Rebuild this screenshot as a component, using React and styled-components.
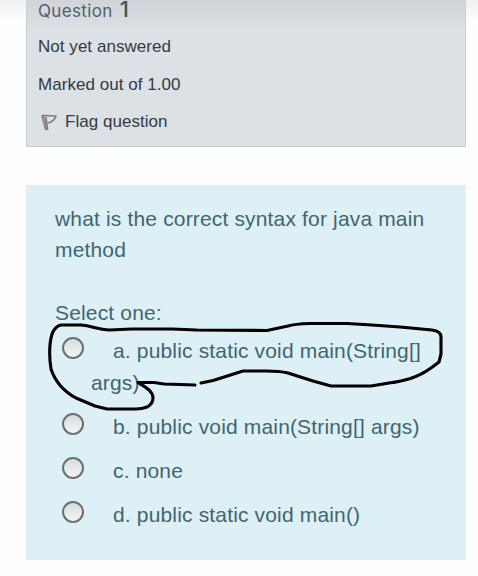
import React from "react";
import styled, { createGlobalStyle } from "styled-components";

const GlobalStyle = createGlobalStyle`
  body {
    margin: 0;
    background: #fefefe;
    font-family: "Liberation Sans", Arial, sans-serif;
    overflow: hidden;
  }
`;

const Page = styled.main`
  box-sizing: border-box;
  width: 478px;
  height: 576px;
  padding: 0 12px 0 26px;
  background: linear-gradient(#f1f1f2, #fefefe 22px);
  overflow: hidden;
`;

const InfoPanel = styled.section`
  box-sizing: border-box;
  height: 147px;
  padding-left: 11px;
  border: 1px solid #c9cdd2;
  border-top: 0;
  background: linear-gradient(#d1d4d8, #dce1e5 30px);
  color: #343a3f;
  font-size: 17px;
  letter-spacing: 0.04px;
`;

const Heading = styled.h3`
  display: flex;
  align-items: baseline;
  gap: 7px;
  height: 28.4px;
  margin: 0;
  color: #50616d;
  font-family: Inter, sans-serif;
  font-weight: 400;
  font-size: 17px;
  line-height: 19px;
  letter-spacing: 0.35px;
`;

const QuestionNumber = styled.span`
  font-size: 22px;
  line-height: 19px;
  font-weight: 500;
  letter-spacing: 0;
  color: #43525e;
`;

const InfoLine = styled.div`
  display: flex;
  align-items: center;
  height: 37.6px;
`;

const FlagIcon = styled.svg`
  width: 20px;
  height: 20px;
  margin-right: 7px;
`;

const QuestionPanel = styled.section`
  position: relative;
  box-sizing: border-box;
  height: 375px;
  margin-top: 38px;
  padding: 17.6px 0 0 29px;
  background: #dcf0f6;
  color: #41666f;
  font-size: 21px;
  line-height: 31.4px;
  letter-spacing: 0.16px;
`;

const Prompt = styled.p`
  width: 385px;
  margin: 0 0 31.4px;
`;

const Choices = styled.div`
  display: grid;
  gap: 12.7px;
  margin-top: 6.9px;
`;

const Choice = styled.label`
  display: flex;
  gap: 7px;
`;

const Radio = styled.input`
  appearance: none;
  flex: none;
  box-sizing: border-box;
  width: 22px;
  height: 22px;
  margin: 2px 0 0 7px;
  border: 2px solid #6b7072;
  border-radius: 50%;
  background: linear-gradient(#d9dbdc, #f5f5f5);
`;

const ChoiceText = styled.span`
  width: 350px;
  text-indent: 22px;
`;

const Ink = styled.svg`
  position: absolute;
  left: 19px;
  top: 135px;
  width: 402px;
  height: 95px;
  pointer-events: none;
`;

const choices = [
  "a. public static void main(String[] args)",
  "b. public void main(String[] args)",
  "c. none",
  "d. public static void main()",
];

export default function App() {
  return (
    <>
      <GlobalStyle />
      <Page>
        <InfoPanel>
          <Heading>
            Question <QuestionNumber>1</QuestionNumber>
          </Heading>
          <InfoLine>Not yet answered</InfoLine>
          <InfoLine>Marked out of 1.00</InfoLine>
          <InfoLine>
            <FlagIcon viewBox="0 0 20 20" fill="none" stroke="#7b7c7e" strokeLinejoin="round">
              <path d="M4.5 3 8.5 18" stroke="#8b8d8f" strokeWidth="3.2" />
              <path d="M4 3.5 18 4 Q16 10 9.5 11" strokeWidth="1.7" />
              <path d="M8 5 9.6 18" strokeWidth="1.6" />
            </FlagIcon>
            Flag question
          </InfoLine>
        </InfoPanel>
        <QuestionPanel>
          <Prompt>what is the correct syntax for java main method</Prompt>
          <div>Select one:</div>
          <Choices>
            {choices.map((text) => (
              <Choice key={text}>
                <Radio type="radio" name="answer" />
                <ChoiceText>{text}</ChoiceText>
              </Choice>
            ))}
          </Choices>
          <Ink
            viewBox="45 320 402 95"
            fill="none"
            stroke="#000"
            strokeWidth="3.1"
            strokeLinecap="round"
            strokeLinejoin="round"
          >
            <path d="M195 385 164 384 154 382.5H138C145 387 153 391 153 398Q153 404 147 407Q142 409 136 409H107L95 406 76 398C63 391 55 381 51 369Q49 357 50 345C51 335 53 327 61 325H81C92 326 97 329 109 330L132 329H172L197 330 267 330.5 288 326Q294 324 310 323.5H347L372 325 400 327 432 330Q441 331 441 337V354L439 362 431 368C417 378 404 381 389 383L371 386H331L313 381 288 373Q280 371 266 371H243L221 378 213 380.5 201 383" />
          </Ink>
        </QuestionPanel>
      </Page>
    </>
  );
}
